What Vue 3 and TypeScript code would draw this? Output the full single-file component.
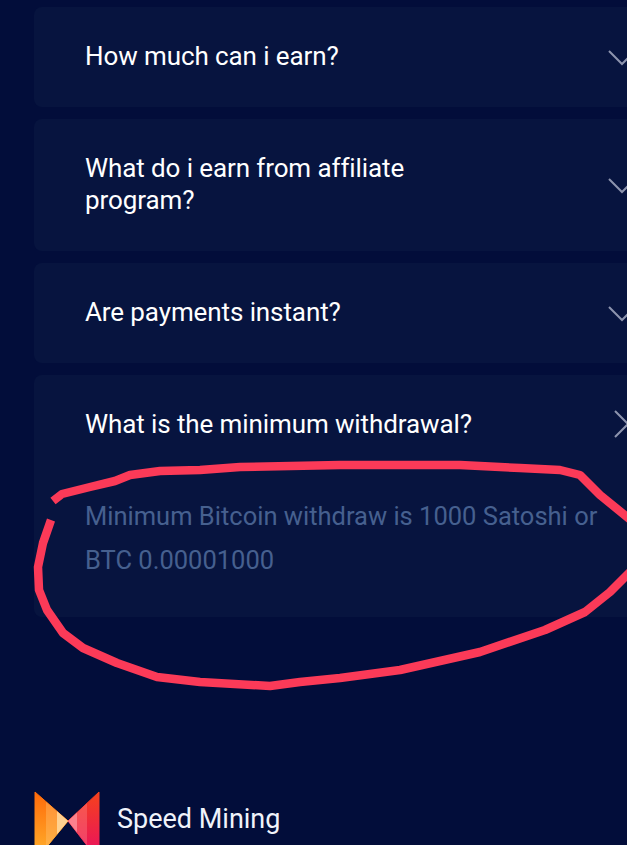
<template>
  <main class="page">
    <svg class="scribble" viewBox="0 0 627 845" aria-hidden="true">
      <path
        d="M53 501 L62 494 L90 487 L115 481 L130 475 L160 471 L200 470 L240 467 L340 465 L460 465 L520 468 L560 470 L580 475 L600 495 L632 521"
      />
      <path
        d="M632 570 L610 592 L585 612 L545 630 L480 652 L400 670 L340 678 L300 682 L270 686 L200 682 L157 677 L117 663 L83 648 L63 633 L47 610 L39 590 L38 567 L43 543 L51 520"
      />
    </svg>

    <section class="faq">
      <article v-for="item in faqs" :key="item.question" class="card">
        <header class="card-head" @click="toggle(item.question)">
          <h3>{{ item.question }}</h3>
          <svg class="chevron" :class="{ open: openItem === item.question }" viewBox="0 0 28 16">
            <path d="M1 1 L14 14 L27 1" />
          </svg>
        </header>
        <p v-if="openItem === item.question && item.answer" class="answer">{{ item.answer }}</p>
      </article>
    </section>

    <footer class="brand">
      <svg class="logo" viewBox="0 0 66 72">
        <defs>
          <linearGradient id="left-wing" x1="0" y1="0" x2="0" y2="1">
            <stop offset="0" stop-color="#ff6a0a" />
            <stop offset="1" stop-color="#ffb52e" />
          </linearGradient>
          <linearGradient id="right-wing" x1="0" y1="0" x2="0" y2="1">
            <stop offset="0" stop-color="#f5421c" />
            <stop offset="1" stop-color="#e80c66" />
          </linearGradient>
        </defs>
        <path d="M1 1 L34 30 L1 70 Z" fill="url(#left-wing)" stroke="url(#left-wing)" stroke-linejoin="round" />
        <path d="M65 1 L34 30 L65 70 Z" fill="url(#right-wing)" stroke="url(#right-wing)" stroke-linejoin="round" />
        <path d="M12 10.7 L34 30 L12 56.7 Z" fill="#ffc070" opacity="0.4" />
        <path d="M23 20.3 L34 30 L23 43.3 Z" fill="#ffd9a0" opacity="0.85" />
        <path d="M53 12.2 L34 30 L53 54.5 Z" fill="#ff8d92" opacity="0.35" />
        <path d="M43 21.6 L34 30 L43 41.6 Z" fill="#ffa5b0" opacity="0.6" />
      </svg>
      <span class="brand-name">Speed Mining</span>
    </footer>
  </main>
</template>

<script setup lang="ts">
import { ref } from 'vue'

type Faq = {
  question: string
  answer?: string
}

const faqs: Faq[] = [
  { question: 'How much can i earn?' },
  { question: 'What do i earn from affiliate program?' },
  { question: 'Are payments instant?' },
  {
    question: 'What is the minimum withdrawal?',
    answer: 'Minimum Bitcoin withdraw is 1000 Satoshi or BTC 0.00001000',
  },
]

const openItem = ref('What is the minimum withdrawal?')

function toggle(question: string): void {
  openItem.value = openItem.value === question ? '' : question
}
</script>

<style>
html,
body {
  margin: 0;
  background: #020d3a;
}
</style>

<style scoped>
.page {
  position: relative;
  width: 627px;
  height: 845px;
  overflow: hidden;
  background: #020d3a;
  font-family: Roboto, "Liberation Sans", sans-serif;
  padding: 7px 0 0 34px;
  box-sizing: border-box;
}

.scribble {
  position: absolute;
  inset: 0;
  width: 627px;
  height: 845px;
  z-index: 2;
  pointer-events: none;
}

.scribble path {
  fill: none;
  stroke: #fb3a58;
  stroke-width: 8.5;
  stroke-linejoin: round;
}

.faq {
  display: flex;
  flex-direction: column;
  gap: 12px;
  width: 640px;
}

.card {
  background: #07143f;
  border-radius: 8px;
}

.card-head {
  display: flex;
  align-items: center;
  justify-content: space-between;
  padding: 33px 38px 35px 51px;
  cursor: pointer;
}

.card-head h3 {
  margin: 0;
  width: 400px;
  font-size: 26px;
  line-height: 32px;
  font-weight: 400;
  letter-spacing: -0.1px;
  color: #ffffff;
}

.chevron {
  flex: none;
  width: 28px;
  height: 16px;
  margin-top: 4px;
  transition: transform 0.2s ease;
}

.chevron.open {
  margin-top: 0;
  transform: rotate(-90deg);
}

.chevron path {
  fill: none;
  stroke: #8d94ae;
  stroke-width: 2;
}

.answer {
  margin: 0;
  padding: 19px 60px 35px 51px;
  font-size: 25.5px;
  line-height: 44px;
  color: #46608f;
}

.brand {
  display: flex;
  align-items: flex-start;
  gap: 17px;
  margin-top: 174px;
}

.logo {
  flex: none;
  width: 66px;
  height: 72px;
}

.brand-name {
  margin-top: 10px;
  font-size: 27px;
  line-height: 36px;
  color: #f0f3fa;
}
</style>
